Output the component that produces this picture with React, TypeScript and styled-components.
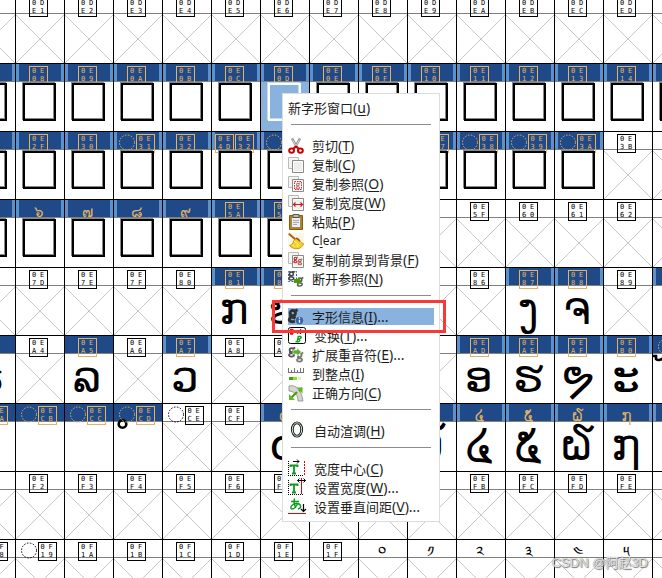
import React from 'react';
import styled, { createGlobalStyle, css } from 'styled-components';

const GlobalStyle = createGlobalStyle`
  *, *::before, *::after { box-sizing: border-box; }
  body { margin: 0; background: #fff; overflow: hidden; }
`;

const NAVY = '#204a87';
const EDGE = '#5b92cc';
const PICKED = '#8ab2de';
const GOLD = '#e3b263';
const RULE = '#808080';

/* ---------- glyph overview grid ---------- */

type Kind = 'empty' | 'box' | 'glyph' | 'mark';

interface CellData {
  code: string;
  kind: Kind;
  char?: string;
  label?: string;
  pair?: string;
  ring?: boolean;
  changed?: boolean;
  picked?: boolean;
  covered?: boolean;
}

const Page = styled.main`
  position: relative;
  height: 100vh;
  overflow: hidden;
  background: #fff;
  font-family: 'Noto Sans', 'Noto Sans CJK SC', sans-serif;
`;

const Sheet = styled.div`
  display: grid;
  grid-template-columns: repeat(15, 49px);
  grid-auto-rows: 68px;
  margin: -4px 0 0 -33px;
`;

const CellFrame = styled.div`
  display: flex;
  flex-direction: column;
  border-right: 1px solid #000;
  border-bottom: 1px solid #000;
`;

const Header = styled.div<{ $filled: boolean; $edges: boolean }>`
  display: flex;
  justify-content: center;
  align-items: flex-start;
  gap: 1px;
  height: 18px;
  padding: 2px 3px 0 0;
  border-bottom: 1px solid ${RULE};
  color: ${(p) => (p.$filled ? GOLD : '#000')};
  background: ${(p) => (p.$filled ? NAVY : '#fff')};
  ${(p) =>
    p.$edges &&
    css`
      background: linear-gradient(90deg, ${EDGE} 3px, ${NAVY} 3px, ${NAVY} calc(100% - 3px), ${EDGE} calc(100% - 3px));
    `}
`;

const CodeBox = styled.span`
  position: relative;
  z-index: 1;
  display: grid;
  grid-template-columns: 8px 8px;
  grid-template-rows: 8px 8px;
  flex: none;
  width: 19px;
  height: 19px;
  border: 1px solid currentColor;
  font: 7px/8px 'DejaVu Sans Mono', monospace;
  text-align: center;
`;

const Ring = styled.svg`
  position: relative;
  z-index: 1;
  flex: none;
  width: 16px;
  height: 17px;
`;

const HeaderChar = styled.span`
  position: relative;
  z-index: 1;
  font: 15px/20px 'DejaVu Sans', 'Noto Sans', sans-serif;
`;

const Body = styled.div<{ $picked?: boolean }>`
  position: relative;
  display: flex;
  flex: 1;
  justify-content: center;
  background: ${(p) => (p.$picked ? PICKED : 'transparent')};
`;

const Missing = styled.span<{ $picked?: boolean }>`
  z-index: 2;
  width: 33px;
  height: 38px;
  margin: 1px 1px 0 0;
  border: 2px solid ${(p) => (p.$picked ? '#fff' : '#000')};
  background: ${(p) => (p.$picked ? PICKED : '#fff')};
  box-shadow: ${(p) =>
    p.$picked ? 'inset -1px -1px 0 #c5d9ef, -1px -1px 0 #c5d9ef' : 'inset -1px -1px 0 #888, -1px -1px 0 #888'};
`;

const BigChar = styled.span`
  padding-right: 4px;
  color: #000;
  font: 44px/46px 'DejaVu Sans', 'Noto Sans', sans-serif;
`;

const Cross = styled.svg`
  display: block;
  width: 100%;
  height: 100%;
`;

const MarkSvg = styled.svg`
  width: 48px;
  height: 49px;
  overflow: visible;
`;

function CodeLabel({ code }: { code: string }) {
  return (
    <CodeBox>
      {code.split('').map((d, i) => (
        <span key={i}>{d}</span>
      ))}
    </CodeBox>
  );
}

function HeaderContent({ data }: { data: CellData }) {
  return (
    <>
      {data.ring && (
        <Ring viewBox="0 0 16 17">
          <circle cx="8" cy="8.5" r="7.5" fill="none" stroke="currentColor" strokeDasharray="1.5 1.5" />
        </Ring>
      )}
      {data.pair && <CodeLabel code={data.pair} />}
      {data.label ? <HeaderChar>{data.label}</HeaderChar> : <CodeLabel code={data.code} />}
    </>
  );
}

function Cell({ data }: { data: CellData }) {
  const filled = data.kind !== 'empty';
  return (
    <CellFrame>
      <Header $filled={filled} $edges={filled && !data.changed}>
        {!data.covered && <HeaderContent data={data} />}
      </Header>
      <Body $picked={data.picked}>
        {data.kind === 'empty' && (
          <Cross viewBox="0 0 48 49" preserveAspectRatio="none">
            <path d="M0 1 48 49M48 1 0 49" stroke="#c8c8c8" fill="none" />
          </Cross>
        )}
        {data.kind === 'box' && <Missing $picked={data.picked} />}
        {data.kind === 'glyph' && <BigChar>{data.char}</BigChar>}
        {data.kind === 'mark' && data.char === 'ring' && (
          <MarkSvg viewBox="0 0 48 49">
            <circle cx="8.5" cy="2" r="3.8" fill="none" stroke="#000" strokeWidth="2.6" />
          </MarkSvg>
        )}
        {data.kind === 'mark' && data.char === 'hook' && (
          <MarkSvg viewBox="0 0 48 49">
            <path d="M0 2h3v3c2 2 6 1 9-3" fill="none" stroke="#000" strokeWidth="2.6" />
          </MarkSvg>
        )}
      </Body>
    </CellFrame>
  );
}

type Extra = Partial<CellData>;

function makeRow(start: number, kind: Kind, extras: Record<number, Extra> = {}): CellData[] {
  return Array.from({ length: 15 }, (_, i) => ({
    code: (start + i).toString(16).toUpperCase().padStart(4, '0'),
    kind,
    ...extras[i],
  }));
}

const glyph = (char: string, more: Extra = {}): Extra => ({ kind: 'glyph', char, ...more });
const digit = (char: string, more: Extra = {}): Extra => ({ kind: 'glyph', char, label: char, ...more });
const blankMark: Extra = { kind: 'mark', changed: true, ring: true };
const box: Extra = { kind: 'box' };
/* Columns whose labels lie behind the open menu. */
const behind: Record<number, Extra> = { 7: { covered: true }, 8: { covered: true }, 9: { covered: true } };

const CELLS: CellData[] = [
  ...makeRow(0x0de0, 'empty'),
  ...makeRow(0x0e07, 'box', { 6: { picked: true } }),
  ...makeRow(0x0e2e, 'box', {
    ...behind,
    3: { ring: true },
    5: { pair: '0E4D', code: '0E32' },
    6: { ring: true },
    9: { ring: true },
    10: { ring: true },
    11: { ring: true },
    12: { ring: true },
    13: { kind: 'empty' },
    14: { kind: 'empty' },
  }),
  ...makeRow(0x0e55, 'empty', {
    ...behind,
    0: { ...box, label: '๕' },
    1: { ...box, label: '๖' },
    2: { ...box, label: '๗' },
    3: { ...box, label: '๘' },
    4: { ...box, label: '๙' },
    5: box,
    6: box,
  }),
  ...makeRow(0x0e7c, 'empty', {
    ...behind,
    5: glyph('ກ'),
    6: glyph('ຂ'),
    11: glyph('ງ'),
    12: glyph('ຈ'),
    14: glyph('ຊ'),
  }),
  ...makeRow(0x0ea3, 'empty', {
    ...behind,
    0: glyph('ຣ', { changed: true }),
    2: glyph('ລ', { changed: true }),
    4: glyph('ວ'),
    10: glyph('ອ'),
    11: glyph('ຮ'),
    12: glyph('ຯ'),
    13: glyph('ະ'),
    14: { ...blankMark, char: 'hook' },
  }),
  ...makeRow(0x0eca, 'empty', {
    ...behind,
    0: blankMark,
    1: blankMark,
    2: blankMark,
    3: { ...blankMark, char: 'ring' },
    4: { ring: true },
    6: digit('໐'),
    9: digit('໓', { covered: true }),
    10: digit('໔'),
    11: digit('໕'),
    12: digit('໖'),
    13: digit('໗'),
    14: digit('໘'),
  }),
  ...makeRow(0x0ef1, 'empty', behind),
  ...makeRow(0x0f18, 'empty', {
    0: { ring: true },
    1: { ring: true },
    8: { label: '༠' },
    9: { label: '༡' },
    10: { label: '༢' },
    11: { label: '༣' },
    12: { label: '༤' },
    13: { label: '༥' },
    14: { label: '༦' },
  }),
];

/* ---------- context menu ---------- */

const Menu = styled.div`
  position: absolute;
  z-index: 5;
  left: 282px;
  top: 93px;
  width: 158px;
  padding: 4px 5px 5px;
  border: 1px solid #dcdcdc;
  background: #fff;
`;

const Item = styled.button<{ $active?: boolean }>`
  display: flex;
  align-items: center;
  gap: 8px;
  width: 100%;
  height: 19px;
  padding: 0;
  border: 0;
  color: #1e1e1e;
  background: ${(p) => (p.$active ? `linear-gradient(${PICKED}, ${PICKED}) 0 1px / 100% 17px no-repeat` : 'none')};
  font: 13px/19px 'Noto Sans CJK SC', sans-serif;
  text-align: left;
  white-space: nowrap;
`;

const Latin = styled.span<{ $plain?: boolean }>`
  font-family: 'Noto Sans', sans-serif;
  font-size: ${(p) => (p.$plain ? 12 : 14)}px;
  line-height: 17px;

  u {
    text-underline-offset: 2px;
  }
`;

const Separator = styled.hr`
  height: 1px;
  margin: 7px 3px 11px;
  border: 0;
  background: #8c8c8c;
`;

const IconSvg = styled.svg<{ $large?: boolean }>`
  flex: none;
  width: ${(p) => (p.$large ? 18 : 16)}px;
  height: ${(p) => (p.$large ? 18 : 16)}px;
  overflow: visible;
`;

const Pages = () => (
  <>
    <path d="M.5.5h10v11H.5z" fill="#f4f4f2" stroke="#bbb" />
    <path d="M4.5 3.5h11v12h-11z" fill="#eeeeec" stroke="#888a85" />
    <path d="M5.5 4.5h9v10h-9z" fill="none" stroke="#fff" />
  </>
);

/* A small two-storey "g" drawn with strokes. */
const LetterG = ({ x, y, s = 1, w = 1.7, color = '#333' }: { x: number; y: number; s?: number; w?: number; color?: string }) => (
  <g transform={`translate(${x} ${y}) scale(${s})`} fill="none" stroke={color} strokeWidth={w}>
    <circle cx="4" cy="3.4" r="2.2" />
    <path d="M6 1.6 8 .6M2.6 5.4c-1.4 1 .2 1.6 2 1.7 3 .2 3 3.4-.6 3.5-3.4.1-3.8-2.3-1.4-3.2" />
  </g>
);

const ICONS: Record<string, React.ReactNode> = {
  cut: (
    <>
      <path d="M4 .5 9.5 10M12 .5 6.5 10" stroke="#888a85" strokeWidth="2.4" />
      <path d="M4.4 1.5 9 9.5M11.6 1.5 7 9.5" stroke="#eee" strokeWidth=".8" />
      <ellipse cx="3.6" cy="12.6" rx="2.4" ry="2.2" fill="none" stroke="#c00" strokeWidth="2" />
      <ellipse cx="12.4" cy="12.6" rx="2.4" ry="2.2" fill="none" stroke="#c00" strokeWidth="2" />
      <path d="m5.5 10.500 2.5-2 2.5 2" fill="none" stroke="#c00" strokeWidth="2" />
    </>
  ),
  copy: <Pages />,
  copyRef: (
    <>
      <Pages />
      <path d="M6.5 5.5h7v8h-7z" fill="#fff" stroke="#d22" strokeDasharray="1.5 1" />
      <LetterG x={7.5} y={6.5} s={0.6} color="#c66" />
    </>
  ),
  copyWidth: (
    <>
      <Pages />
      <path d="M5.5 9.5h9M7.5 7.5l-2 2 2 2M12.5 7.5l2 2-2 2" fill="none" stroke="#cc1a1a" strokeWidth="1.2" />
    </>
  ),
  paste: (
    <>
      <path d="M1.5 1.5h13v14h-13z" fill="#c17d11" stroke="#8f5902" />
      <path d="M3.5 3.5h9v10h-9z" fill="#eeeeec" stroke="#888a85" />
      <path d="M5 .5h6v3H5z" fill="#babdb6" stroke="#555753" />
      <path d="M5 6.5h6M5 8.5h6M5 10.5h4" stroke="#aaa" />
    </>
  ),
  clear: (
    <>
      <path d="M0 0h16v16H0z" fill="#fbf7e8" />
      <path d="m.8.8 7 6" stroke="#a4640a" strokeWidth="2" />
      <path d="M8.5 5 5.5 8c-.5 3-2 4-4 4.5 2 2.5 5 3.5 9 3.2 2-.7 4.5-2.7 5-5C13 10 11.5 8 11 6z" fill="#f3d22b" stroke="#b58900" strokeWidth=".8" />
      <path d="m6 8 5 4M4.5 12l2 1.5M9 12l1 2" stroke="#fff3a0" />
      <path d="m8 5 4 3" stroke="#cc2a10" strokeWidth="1.3" />
    </>
  ),
  copyFg: (
    <>
      <Pages />
      <path d="M6 5h8v9H6z" fill="#f8eeee" />
      <LetterG x={5} y={4.5} s={0.6} color="#b22" />
      <LetterG x={9.5} y={6.5} s={0.6} color="#a55" />
    </>
  ),
  unlink: (
    <>
      <path d="M.5.5h8v10h-8z" fill="#eef3fa" stroke="#3465a4" strokeDasharray="2 1.5" />
      <LetterG x={0} y={0} s={0.85} color="#444" />
      <LetterG x={8.5} y={6} s={0.85} color="#555" />
      <path d="M6 8h4v-2l3.5 4L10 14v-2H6z" fill="#4e9a06" />
    </>
  ),
  info: (
    <>
      <LetterG x={0} y={0} s={1.2} w={2.4} color="#2e3436" />
      <circle cx="11.5" cy="11.5" r="4.3" fill="#3465a4" stroke="#a9c4e6" strokeWidth=".8" />
      <path d="M11.5 10.8v3M11.5 8.5v1.2" stroke="#fff" strokeWidth="1.3" />
    </>
  ),
  transform: (
    <>
      <rect x=".5" y=".5" width="17" height="16" rx="2" fill="#fff" stroke="#000" />
      <path d="M3 2v5M2 2.5h2.5q2 1 0 2.3H3q3.5.2 1.5 2.200H2" stroke="#e00" fill="none" strokeWidth="1.3" />
      <path d="M9 6.5 12.500 3v4M10 5.500h2.500" stroke="#222" fill="none" strokeWidth="1.3" />
      <path d="m10.500 9-1.500 6M9.500 9.500h3q2 1-1.200 2.500h-1q3 .300.400 2.800H7.500" stroke="#15a32a" fill="none" strokeWidth="1.400" />
    </>
  ),
  accent: (
    <>
      <LetterG x={0} y={0} s={0.9} w={2} color="#555" />
      <LetterG x={8} y={5} s={0.9} w={2} color="#777" />
      <path d="M5 3h4V1l4.5 4L9 9V7H5z" fill="#5bb023" stroke="#fff" strokeWidth=".6" />
    </>
  ),
  round: (
    <>
      <path d="M.5 2v4M3.5 4v2M6.5 2v4M9.5 4v2M12.5 2v4M15.5 2v4M0 6.5h16" stroke="#777" fill="none" />
      <path d="M1 11h8v3H1z" fill="#8ae234" />
      <path d="M1 11h4v3H1z" fill="#4e9a06" />
      <path d="M10 11h3v3h-3z" fill="#dff3c8" />
    </>
  ),
  direction: (
    <>
      <path d="M1 1c7-1.5 12 3 14 15h-5C10 10 7 6.5 1 6z" fill="#d3d7cf" stroke="#888a85" strokeWidth=".8" />
      <path d="m2 14 7-7M11 6l3-3" stroke="#4e9a06" strokeWidth="2.2" />
      <path d="M1 9v6h6zM14.5 2.5v6l-6-6z" fill="#62bb24" />
    </>
  ),
  hint: (
    <>
      <ellipse cx="9" cy="7.5" rx="4.7" ry="6.7" fill="none" stroke="#111" strokeWidth="2.8" />
      <ellipse cx="9" cy="7.5" rx="4.7" ry="6.7" fill="none" stroke="#d9f0dd" strokeWidth="1" />
    </>
  ),
  center: (
    <>
      <path d="M.5 1v14M0 15.5h16" stroke="#000" strokeDasharray="1 1" />
      <path d="M16.5 1v15" stroke="#e00" strokeDasharray="2 1" />
      <path d="M5 1.5h6M9-.5l2 2-2 2" fill="none" stroke="#000" />
      <path d="M2.5 7V5.5h7V7M6 5.5v8M4 13.5h4" fill="none" stroke="#0a9a1e" strokeWidth="1.8" />
    </>
  ),
  width: (
    <>
      <path d="M.5 1v14M0 15.5h16" stroke="#000" strokeDasharray="1 1" />
      <path d="M13.5-1v16" stroke="#e00" />
      <path d="M9.5 1.5h8M11.5-.5l-2 2 2 2M15.5-.5l2 2-2 2" fill="none" stroke="#000" />
      <path d="M2.5 7V5.5h7V7M6 5.5v8M4 13.5h4" fill="none" stroke="#0a9a1e" strokeWidth="1.8" />
    </>
  ),
  vertical: (
    <>
      <path d="M3 3.5h8M6.5.5c-1 4 0 7 1.5 9.500M10 5c-2 4-4 6-6 6-3-1 0-5.500 4.500-5.500 5 0 5.500 4.500 1.500 5.500" fill="none" stroke="#0a9a1e" strokeWidth="1.4" />
      <path d="M15.5 6v7M13 11l2.5 2.5L18 11" fill="none" stroke="#000" strokeWidth="1.2" />
      <path d="M0 15.5h18" stroke="#e00" />
    </>
  ),
};

interface Entry {
  text?: string;
  key?: string;
  icon?: string;
  more?: boolean;
  sep?: boolean;
}

const ENTRIES: Entry[] = [
  { text: '新字形窗口', key: 'u' },
  { sep: true },
  { text: '剪切', key: 'T', icon: 'cut' },
  { text: '复制', key: 'C', icon: 'copy' },
  { text: '复制参照', key: 'O', icon: 'copyRef' },
  { text: '复制宽度', key: 'W', icon: 'copyWidth' },
  { text: '粘贴', key: 'P', icon: 'paste' },
  { icon: 'clear' },
  { text: '复制前景到背景', key: 'F', icon: 'copyFg' },
  { text: '断开参照', key: 'N', icon: 'unlink' },
  { sep: true },
  { text: '字形信息', key: 'I', icon: 'info', more: true },
  { text: '变换', key: 'T', icon: 'transform', more: true },
  { text: '扩展重音符', key: 'E', icon: 'accent', more: true },
  { text: '到整点', key: 'I', icon: 'round' },
  { text: '正确方向', key: 'C', icon: 'direction' },
  { sep: true },
  { text: '自动渲调', key: 'H', icon: 'hint' },
  { sep: true },
  { text: '宽度中心', key: 'C', icon: 'center' },
  { text: '设置宽度', key: 'W', icon: 'width', more: true },
  { text: '设置垂直间距', key: 'V', icon: 'vertical', more: true },
];

const LARGE = ['transform', 'hint', 'center', 'width', 'vertical'];

function MenuEntry({ entry }: { entry: Entry }) {
  if (entry.sep) return <Separator />;
  const large = LARGE.includes(entry.icon ?? '');
  return (
    <Item type="button" role="menuitem" $active={entry.icon === 'info'}>
      {entry.icon && (
        <IconSvg $large={large} viewBox={large ? '0 0 18 18' : '0 0 16 16'} fill="none" aria-hidden="true">
          {ICONS[entry.icon]}
        </IconSvg>
      )}
      {entry.text ? (
        <span>
          {entry.text}
          <Latin>
            (<u>{entry.key}</u>){entry.more && '...'}
          </Latin>
        </span>
      ) : (
        <Latin $plain>
          C<u>l</u>ear
        </Latin>
      )}
    </Item>
  );
}

const Callout = styled.div`
  position: absolute;
  z-index: 6;
  left: 272px;
  top: 300px;
  width: 174px;
  height: 33px;
  border: 3px solid #fb3838;
  pointer-events: none;
`;

const Watermark = styled.div`
  position: absolute;
  z-index: 7;
  right: 14px;
  bottom: 6px;
  color: rgba(255, 255, 255, 0.75);
  font: 13px/18px 'Liberation Sans', 'Noto Sans CJK SC', sans-serif;
  text-shadow: 1px 1px 1px #777, 0 0 1px #777;
`;

export default function App() {
  return (
    <>
      <GlobalStyle />
      <Page>
        <Sheet>
          {CELLS.map((c, i) => (
            <Cell key={i} data={c} />
          ))}
        </Sheet>
        <Menu role="menu">
          {ENTRIES.map((e, i) => (
            <MenuEntry key={i} entry={e} />
          ))}
        </Menu>
        <Callout />
        <Watermark>CSDN @阿赵3D</Watermark>
      </Page>
    </>
  );
}
